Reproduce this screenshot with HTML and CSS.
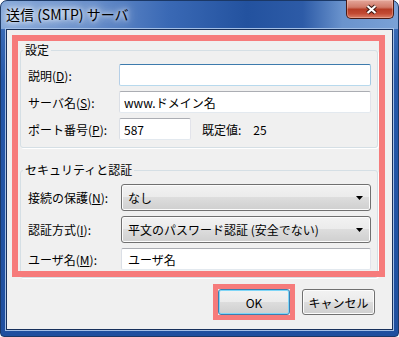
FILE: index.html
```html
<!DOCTYPE html>
<html lang="ja">
<head>
    <meta charset="UTF-8">
    <meta name="viewport" content="width=device-width, initial-scale=1.0">
    <title>送信 (SMTP) サーバ</title>
    <link rel="stylesheet" href="styles.css">
</head>
<body>
    <div class="window">
        <div class="titlebar">
            <span class="title">送信 (SMTP) サーバ</span>
            <button class="close" aria-label="閉じる">
                <svg width="13" height="11" viewBox="0 0 13 11">
                    <path d="M2.5 2 L10.5 9 M10.5 2 L2.5 9" stroke="#3a1712" stroke-width="4.2" fill="none"/>
                    <path d="M2.5 2 L10.5 9 M10.5 2 L2.5 9" stroke="#fff" stroke-width="2.2" fill="none"/>
                </svg>
            </button>
        </div>
        <div class="glass">
            <div class="client">
                <div class="groups">
                    <fieldset class="group">
                        <legend>設定</legend>
                        <div class="fields">
                            <label class="lbl">説明(<u>D</u>):</label>
                            <input class="text focus" type="text" value="">

                            <label class="lbl">サーバ名(<u>S</u>):</label>
                            <input class="text" type="text" value="www.ドメイン名">

                            <label class="lbl">ポート番号(<u>P</u>):</label>
                            <div class="port">
                                <input class="text short" type="text" value="587">
                                <span class="default-lbl">既定値:</span>
                                <span class="default-val">25</span>
                            </div>
                        </div>
                    </fieldset>

                    <fieldset class="group sec">
                        <legend>セキュリティと認証</legend>
                        <div class="fields">
                            <label class="lbl">接続の保護(<u>N</u>):</label>
                            <div class="combo">
                                <span>なし</span>
                                <svg class="arrow" width="7" height="4" viewBox="0 0 7 4"><path d="M0 0 H7 L3.5 4 Z" fill="#000"/></svg>
                            </div>

                            <label class="lbl">認証方式(<u>I</u>):</label>
                            <div class="combo">
                                <span>平文のパスワード認証 (安全でない)</span>
                                <svg class="arrow" width="7" height="4" viewBox="0 0 7 4"><path d="M0 0 H7 L3.5 4 Z" fill="#000"/></svg>
                            </div>

                            <label class="lbl">ユーザ名(<u>M</u>):</label>
                            <input class="text" type="text" value="ユーザ名">
                        </div>
                    </fieldset>
                </div>

                <div class="buttons">
                    <span class="mark"><button class="btn default">OK</button></span>
                    <button class="btn cancel">キャンセル</button>
                </div>
            </div>
        </div>
    </div>
</body>
</html>
```

FILE: styles.css
```css
body {
    margin: 0;
    font-family: "Noto Sans CJK JP", "Noto Sans", sans-serif;
    font-size: 12px;
    color: #000;
}

.window {
    box-sizing: border-box;
    width: 399px;
    height: 337px;
    border: 1px solid #1b3866;
    border-radius: 7px 7px 4px 4px;
    padding: 0 4px 5px;
    display: flex;
    flex-direction: column;
    background:
        linear-gradient(to right, #86a8d9 0%, #6a90cb 22%, #3a69b5 42%, #23529f 62%, #2d5ba7 76%, #6a93cd 86%, #7aa1d6 100%) top / 100% 28px no-repeat,
        linear-gradient(to bottom, #4474bb 0px, #2558a9 80px, #1f4f9f 100%);
}

.titlebar {
    height: 27px;
    display: flex;
    align-items: flex-start;
    justify-content: space-between;
}

.title {
    padding-left: 1px;
    margin-top: 4px;
    font-size: 14px;
    line-height: 18px;
    text-shadow: 0 0 4px #fff, 0 0 8px #fff, 0 0 12px rgba(255,255,255,0.8);
}

.close {
    width: 48px;
    height: 19px;
    margin-top: -1px;
    padding: 0;
    border: 1px solid #4a1a14;
    border-top: none;
    border-radius: 0 0 5px 5px;
    background: linear-gradient(to bottom, #e4a79b 0%, #d17a69 40%, #b63d27 52%, #c24a33 75%, #db8069 100%);
    box-shadow: inset 0 0 0 1px rgba(255,220,210,0.35);
    display: flex;
    align-items: center;
    justify-content: center;
}

.close svg {
    margin-left: 3px;
}

.glass {
    flex: 1;
    display: flex;
    border: 1px solid #a3bfe6;
}

.client {
    flex: 1;
    display: flex;
    flex-direction: column;
    border: 1px solid #17305b;
    background-color: #f0f0f0;
    padding: 13px 14px 0 13px;
}

.groups {
    position: relative;
}

/* highlight frame drawn over the two group boxes */
.groups::after {
    content: '';
    position: absolute;
    left: -8px;
    top: -8px;
    right: -7px;
    bottom: 1px;
    border: 6px solid #f67b7b;
    pointer-events: none;
}

.group {
    margin: 0;
    min-width: 0;
    border: 1px solid #d5dfe5;
    border-radius: 3px;
    padding: 7px 6px 7px 7px;
    box-shadow: 1px 1px 0 #fff;
}

.group.sec {
    margin-top: 15px;
}

.group legend {
    padding: 0 2px;
    margin-left: -5px;
    line-height: 14px;
}

.fields {
    display: grid;
    grid-template-columns: 91px 1fr;
    row-gap: 5px;
    align-items: center;
}

.sec .fields {
    grid-template-columns: 93px 1fr;
}

.lbl {
    white-space: nowrap;
}

.text {
    box-sizing: border-box;
    height: 22px;
    width: 100%;
    margin: 0;
    padding: 0 4px;
    font: inherit;
    color: #000;
    background: #fff;
    border: 1px solid;
    border-color: #abadb3 #e2e3ea #e3e9ef #dbdfe6;
    border-radius: 2px;
    outline: none;
}

.sec .text {
    padding: 0 6px;
}

.text.focus {
    border-color: #3d7bad #a4c9e3 #b7d9ed #b5cfe7;
}

.text.short {
    width: 72px;
}

.port {
    display: flex;
    align-items: center;
}

.default-lbl {
    margin-left: 11px;
}

.default-val {
    margin-left: 12px;
}

.combo,
.btn {
    box-sizing: border-box;
    border: 1px solid #707070;
    border-radius: 3px;
    background: linear-gradient(to bottom, #f2f2f2 0%, #ebebeb 50%, #dddddd 50%, #cfcfcf 100%);
    box-shadow: inset 0 0 0 1px #fcfcfc;
}

.combo {
    height: 27px;
    display: flex;
    align-items: center;
    justify-content: space-between;
    padding: 0 7px 0 6px;
}

.buttons {
    display: flex;
    justify-content: flex-end;
    gap: 12px;
    margin-top: 11px;
    padding-right: 3px;
}

.btn {
    height: 26px;
    padding: 0;
    font: inherit;
    color: #000;
}

.btn.default {
    width: 72px;
    border-color: #3c7fb1;
    box-shadow: inset 0 0 0 1px #7fd6f7;
    display: block;
}

.btn.cancel {
    width: 73px;
}

.mark {
    position: relative;
}

/* highlight frame around the default button */
.mark::after {
    content: '';
    position: absolute;
    inset: -5px;
    border: 5px solid #f67b7b;
    pointer-events: none;
}
```
